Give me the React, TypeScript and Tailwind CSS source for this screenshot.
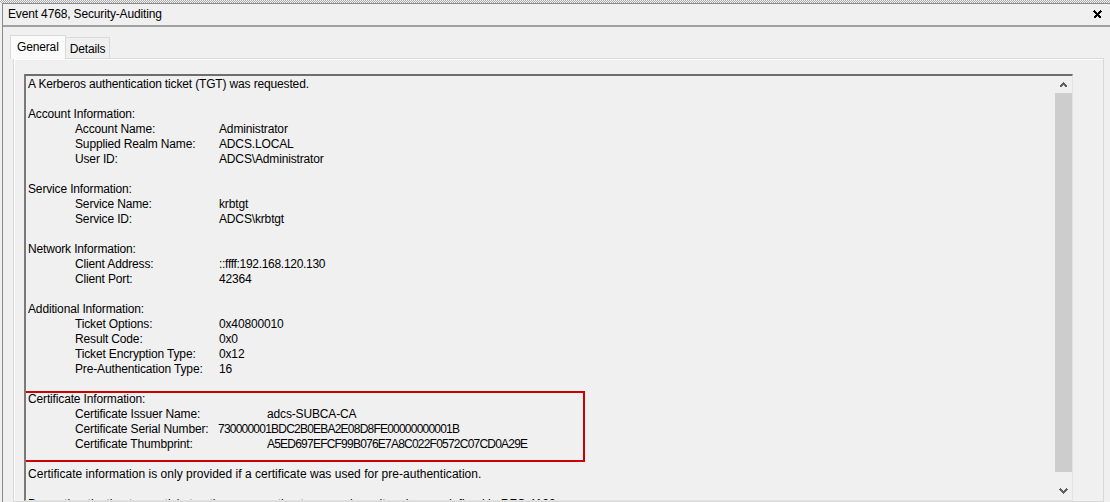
import React from "react";

type Row =
  | { k: "t"; text: string; c?: string }
  | { k: "b" }
  | { k: "kv"; label: string; value: string; w?: string; vc?: string };

const HEX = "tracking-[-0.78px]";

const rows: Row[] = [
  { k: "t", text: "A Kerberos authentication ticket (TGT) was requested." },
  { k: "b" },
  { k: "t", text: "Account Information:" },
  { k: "kv", label: "Account Name:", value: "Administrator" },
  { k: "kv", label: "Supplied Realm Name:", value: "ADCS.LOCAL" },
  { k: "kv", label: "User ID:", value: "ADCS\\Administrator" },
  { k: "b" },
  { k: "t", text: "Service Information:" },
  { k: "kv", label: "Service Name:", value: "krbtgt" },
  { k: "kv", label: "Service ID:", value: "ADCS\\krbtgt" },
  { k: "b" },
  { k: "t", text: "Network Information:" },
  { k: "kv", label: "Client Address:", value: "::ffff:192.168.120.130", vc: "tracking-[-0.3px]" },
  { k: "kv", label: "Client Port:", value: "42364" },
  { k: "b" },
  { k: "t", text: "Additional Information:" },
  { k: "kv", label: "Ticket Options:", value: "0x40800010" },
  { k: "kv", label: "Result Code:", value: "0x0" },
  { k: "kv", label: "Ticket Encryption Type:", value: "0x12" },
  { k: "kv", label: "Pre-Authentication Type:", value: "16" },
  { k: "b" },
  { k: "t", text: "Certificate Information:" },
  { k: "kv", label: "Certificate Issuer Name:", value: "adcs-SUBCA-CA", w: "w-[192px]" },
  { k: "kv", label: "Certificate Serial Number:", value: "730000001BDC2B0EBA2E08D8FE00000000001B", w: "w-[143px]", vc: HEX },
  { k: "kv", label: "Certificate Thumbprint:", value: "A5ED697EFCF99B076E7A8C022F0572C07CD0A29E", w: "w-[192px]", vc: HEX },
  { k: "b" },
  { k: "t", text: "Certificate information is only provided if a certificate was used for pre-authentication.", c: "tracking-[0.02px]" },
  { k: "b" },
  { k: "t", text: "Pre-authentication types, ticket options, encryption types and result codes are defined in RFC 4120.", c: "tracking-[0.02px]" },
];

function Line({ r }: { r: Row }) {
  if (r.k === "b") return <div className="h-[15px]" />;
  if (r.k === "t")
    return <div className={`h-[15px] leading-[15px] whitespace-nowrap ${r.c ?? ""}`}>{r.text}</div>;
  return (
    <div className="h-[15px] leading-[15px] whitespace-nowrap flex pl-[47px]">
      <span className={`${r.w ?? "w-[144px]"} shrink-0`}>{r.label}</span>
      <span className={r.vc ?? ""}>{r.value}</span>
    </div>
  );
}

export default function App() {
  return (
    <div className="w-[1110px] h-[502px] overflow-hidden bg-[#f0f0f0] text-black text-[12px] tracking-[-0.15px] font-['Liberation_Sans',Arial,sans-serif] flex flex-col">
      <div className="h-[3px] shrink-0 bg-[conic-gradient(#a8a8a8_25%,#f4f4f4_0_50%,#a8a8a8_0_75%,#f4f4f4_0)] bg-[length:2px_2px]" />
      <div className="flex-1 min-h-0 ml-[2px] border-l border-t border-[#8a8a8a] flex flex-col">
        <div className="h-[21px] shrink-0 flex items-center justify-between pl-[5px] pr-[8px]">
          <span className="leading-[15px]">Event 4768, Security-Auditing</span>
          <svg width="9" height="9" viewBox="0 0 9 9" shapeRendering="crispEdges">
            <path d="M1 1 L8 8 M8 1 L1 8" stroke="#000" strokeWidth="2.2" />
          </svg>
        </div>
        <div className="h-[2px] shrink-0 bg-[#a0a0a0]" />
        <div className="flex-1 min-h-0 flex flex-col pl-[7px] pr-[6px] pt-[7px]">
          <div className="flex items-end h-[24px] shrink-0">
            <div className="h-[24px] px-[6px] bg-[#fbfbfb] border border-b-0 border-[#d9d9d9] flex items-center leading-[15px] -mb-px relative z-10">
              General
            </div>
            <div className="h-[21px] px-[4px] border border-b-0 border-l-0 border-[#d9d9d9] flex items-center pt-[2px] leading-[15px]">
              Details
            </div>
          </div>
          <div className="flex-1 min-h-0 ml-[3px] border border-[#d9d9d9] shadow-[inset_1px_1px_0_#ffffff] flex flex-col pt-[15px] pl-[10px] pr-[30px]">
            <div className="flex-1 min-h-0 border-t-2 border-l-2 border-t-[#6e6e6e] border-l-[#7a7a7a] border-r border-b border-r-[#e3e3e3] border-b-[#e3e3e3] flex">
              <div className="flex-1 min-w-0 overflow-hidden pl-[2px] pt-[1px] relative">
                {rows.map((r, i) => (
                  <Line key={i} r={r} />
                ))}
                <div className="absolute left-[-3px] top-[315px] w-[562px] h-[71px] border-2 border-[#cc0000]" />
              </div>
              <div className="w-[17px] shrink-0 bg-[#f0f0f0] flex flex-col">
                <div className="h-[17px] flex items-center justify-center">
                  <svg width="9" height="6" viewBox="0 0 9 6" shapeRendering="crispEdges">
                    <path d="M1 5 L4.5 1.5 L8 5" stroke="#606060" strokeWidth="2" fill="none" />
                  </svg>
                </div>
                <div className="flex-1 bg-[#cdcdcd]" />
                <div className="h-[28px] flex items-end justify-center pb-[6px]">
                  <svg width="9" height="6" viewBox="0 0 9 6" shapeRendering="crispEdges">
                    <path d="M1 1 L4.5 4.5 L8 1" stroke="#606060" strokeWidth="2" fill="none" />
                  </svg>
                </div>
              </div>
            </div>
          </div>
        </div>
      </div>
    </div>
  );
}
